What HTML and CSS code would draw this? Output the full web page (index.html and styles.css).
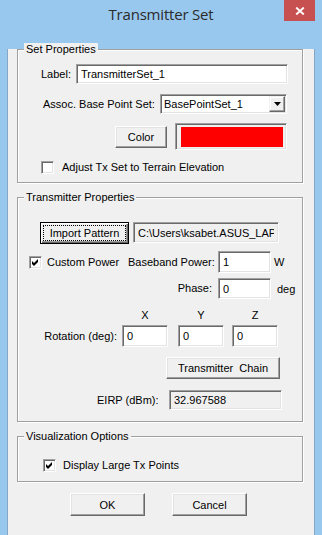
FILE: index.html
```html
<!DOCTYPE html>
<html lang="en">
<head>
    <meta charset="UTF-8">
    <title>Transmitter Set</title>
    <link rel="stylesheet" href="styles.css">
</head>
<body>
    <div class="window">
        <div class="titlebar">
            <span></span>
            <div class="title">Transmitter Set</div>
            <div class="close-btn">
                <svg width="10" height="8" viewBox="0 0 10 8">
                    <path d="M1.2 0.6 L8.8 7.4 M8.8 0.6 L1.2 7.4" stroke="#fff" stroke-width="2" fill="none"/>
                </svg>
            </div>
        </div>
        <div class="client">
            <!-- Set Properties -->
            <div class="group group-set">
                <div class="group-title">Set Properties</div>
                <div class="row row-label">
                    <span class="lbl lbl-label">Label:</span>
                    <input class="field field-label" type="text" value="TransmitterSet_1">
                </div>
                <div class="row row-base">
                    <span class="lbl lbl-base">Assoc. Base Point Set:</span>
                    <div class="combo">
                        <span class="combo-text">BasePointSet_1</span>
                        <span class="drop-btn">
                            <svg width="7" height="4" viewBox="0 0 7 4"><path d="M0 0 H7 L3.5 4 Z" fill="#000"/></svg>
                        </span>
                    </div>
                </div>
                <div class="row row-color">
                    <button class="btn btn-color">Color</button>
                    <div class="swatch"><div class="swatch-fill"></div></div>
                </div>
                <div class="row row-adjust">
                    <span class="checkbox"></span>
                    <span class="check-text">Adjust Tx Set to Terrain Elevation</span>
                </div>
            </div>

            <!-- Transmitter Properties -->
            <div class="group group-tx">
                <div class="group-title">Transmitter Properties</div>
                <div class="row row-import">
                    <button class="btn btn-default btn-import">Import Pattern</button>
                    <input class="field field-path" type="text" value="C:\Users\ksabet.ASUS_LAPTOP\Documents\pattern.uan" readonly>
                </div>
                <div class="row row-power">
                    <span class="check-item">
                        <span class="checkbox checked">
                            <svg width="9" height="9" viewBox="0 0 9 9"><path d="M1 3 L3 5 L7 1 L7 4 L3 8 L1 6 Z" fill="#000"/></svg>
                        </span>
                        <span class="check-text power-text">Custom Power</span>
                    </span>
                    <span class="lbl lbl-right">Baseband Power:</span>
                    <input class="field field-small field-power" type="text" value="1">
                    <span class="unit unit-w">W</span>
                </div>
                <div class="row row-phase">
                    <span class="lbl lbl-right">Phase:</span>
                    <input class="field field-small field-phase" type="text" value="0">
                    <span class="unit unit-deg">deg</span>
                </div>
                <div class="rot-grid">
                    <span></span>
                    <span class="axis">X</span>
                    <span class="axis">Y</span>
                    <span class="axis">Z</span>
                    <span class="lbl rot-label">Rotation (deg):</span>
                    <input class="field field-rot" type="text" value="0">
                    <input class="field field-rot" type="text" value="0">
                    <input class="field field-rot" type="text" value="0">
                </div>
                <div class="row row-chain">
                    <button class="btn btn-chain">Transmitter&nbsp; Chain</button>
                </div>
                <div class="row row-eirp">
                    <span class="lbl lbl-eirp">EIRP (dBm):</span>
                    <input class="field field-eirp" type="text" value="32.967588" readonly>
                </div>
            </div>

            <!-- Visualization Options -->
            <div class="group group-vis">
                <div class="group-title">Visualization Options</div>
                <div class="row row-large">
                    <span class="checkbox checked">
                        <svg width="9" height="9" viewBox="0 0 9 9"><path d="M1 3 L3 5 L7 1 L7 4 L3 8 L1 6 Z" fill="#000"/></svg>
                    </span>
                    <span class="check-text large-text">Display Large Tx Points</span>
                </div>
            </div>

            <div class="dialog-buttons">
                <button class="btn btn-dialog">OK</button>
                <button class="btn btn-dialog btn-cancel">Cancel</button>
            </div>
        </div>
    </div>
</body>
</html>
```

FILE: styles.css
```css
* {
    box-sizing: border-box;
    margin: 0;
    padding: 0;
    font-family: "Liberation Sans", Arial, sans-serif;
}

html, body {
    width: 100%;
    height: 100%;
    overflow: hidden;
}

body {
    background-color: #99c8ee;
    font-size: 11px;
    color: #000;
}

.window {
    width: 322px;
    height: 535px;
    background-color: #99c8ee;
}

/* title bar */
.titlebar {
    height: 30px;
    display: grid;
    grid-template-columns: 1fr auto 1fr;
}

.title {
    font-family: "Open Sans", "Noto Sans", sans-serif;
    font-size: 15px;
    line-height: 20px;
    padding-top: 4px;
    color: #2b2b2b;
    letter-spacing: -0.2px;
}

.close-btn {
    justify-self: end;
    width: 31px;
    height: 21px;
    margin-right: 7px;
    background-color: #c75050;
    display: flex;
    align-items: center;
    justify-content: center;
}

/* dialog body */
.client {
    margin-left: 7px;
    width: 308px;
    height: 497px;
    background-color: #f0f0f0;
    border: 1px solid #86a6c6;
    border-top: 0;
}

.group {
    margin: 0 11px 0 9px;
    border: 1px solid #a0a0a0;
    box-shadow: inset 1px 1px 0 #fff, 1px 1px 0 #fff;
}

.group-set {
    margin-top: 19px;
    padding-bottom: 8px;
}

.group-tx {
    margin-top: 14px;
    padding-bottom: 11px;
}

.group-vis {
    margin-top: 14px;
    padding-bottom: 9px;
}

.group-title {
    width: fit-content;
    margin: -7px 0 0 6px;
    padding: 0 2px;
    line-height: 13px;
    background-color: #f0f0f0;
}

.row {
    display: flex;
    align-items: center;
}

.lbl {
    line-height: 13px;
    white-space: nowrap;
}

/* sunken edit boxes */
.field {
    font: inherit;
    font-size: 11px;
    color: #000;
    background-color: #fff;
    border: 1px solid;
    border-color: #a0a0a0 #fff #fff #a0a0a0;
    box-shadow: inset 1px 1px 0 #696969, inset -1px -1px 0 #e3e3e3;
    padding: 0 4px;
    outline: none;
}

.field[readonly] {
    background-color: #f0f0f0;
}

/* raised push buttons */
.btn {
    font: inherit;
    font-size: 11px;
    color: #000;
    background-color: #f0f0f0;
    border: 1px solid;
    border-color: #fff #696969 #696969 #fff;
    box-shadow: inset -1px -1px 0 #a0a0a0, inset 1px 1px 0 #e3e3e3;
}

.btn-default {
    border-color: #000;
    box-shadow: inset 1px 1px 0 #fff, inset -1px -1px 0 #696969, inset -2px -2px 0 #a0a0a0;
    outline: 1px dotted #000;
    outline-offset: -4px;
}

.checkbox {
    flex: none;
    width: 13px;
    height: 13px;
    background-color: #fff;
    border: 1px solid;
    border-color: #a0a0a0 #fff #fff #a0a0a0;
    box-shadow: inset 1px 1px 0 #696969, inset -1px -1px 0 #e3e3e3;
    display: flex;
    align-items: center;
    justify-content: center;
}

.check-text {
    line-height: 13px;
    white-space: nowrap;
}

/* Set Properties rows */
.row-label {
    margin-top: 8px;
    height: 20px;
    padding-left: 23px;
}

.lbl-label {
    width: 35px;
}

.field-label {
    width: 212px;
    height: 20px;
}

.row-base {
    margin-top: 10px;
    height: 20px;
    padding-left: 25px;
}

.lbl-base {
    width: 117px;
}

.combo {
    width: 127px;
    height: 20px;
    background-color: #fff;
    border: 1px solid;
    border-color: #a0a0a0 #fff #fff #a0a0a0;
    box-shadow: inset 1px 1px 0 #696969, inset -1px -1px 0 #e3e3e3;
    display: flex;
    align-items: center;
    padding: 1px;
}

.combo-text {
    flex-grow: 1;
    padding-left: 2px;
}

.drop-btn {
    width: 16px;
    height: 16px;
    background-color: #f0f0f0;
    border: 1px solid;
    border-color: #f0f0f0 #696969 #696969 #f0f0f0;
    box-shadow: inset -1px -1px 0 #a0a0a0, inset 1px 1px 0 #fff;
    display: flex;
    align-items: center;
    justify-content: center;
}

.row-color {
    margin-top: 9px;
    height: 27px;
    padding-left: 97px;
}

.btn-color {
    width: 52px;
    height: 22px;
}

.swatch {
    margin-left: 8px;
    width: 112px;
    height: 27px;
    border: 1px solid;
    border-color: #a0a0a0 #fff #fff #a0a0a0;
    box-shadow: inset 1px 1px 0 #696969, inset -1px -1px 0 #e3e3e3;
    padding: 3px 3px 2px 5px;
    display: flex;
}

.swatch-fill {
    flex-grow: 1;
    background-color: #f00;
}

.row-adjust {
    margin-top: 11px;
    height: 13px;
    padding-left: 23px;
}

.row-adjust .check-text {
    margin-left: 8px;
}

/* Transmitter Properties rows */
.row-import {
    margin-top: 18px;
    height: 22px;
    padding-left: 22px;
    align-items: flex-start;
}

.btn-import {
    width: 89px;
    height: 22px;
}

.field-path {
    margin-left: 4px;
    width: 146px;
    height: 21px;
}

.row-power {
    margin-top: 7px;
    height: 22px;
    padding-left: 11px;
}

.check-item {
    width: 99px;
    display: flex;
    align-items: center;
}

.power-text {
    margin-left: 5px;
}

.lbl-right {
    width: 84px;
    text-align: right;
}

.field-small {
    margin-left: 6px;
    width: 53px;
}

.field-power {
    height: 22px;
}

.unit-w {
    margin-left: 3px;
}

.row-phase {
    margin-top: 5px;
    height: 21px;
    padding-left: 110px;
}

.field-phase {
    height: 21px;
}

.unit-deg {
    margin-left: 6px;
}

.rot-grid {
    margin-top: 10px;
    display: grid;
    grid-template-columns: 104px 56px 54px 46px;
    grid-template-rows: 13px 22px;
    row-gap: 3px;
}

.axis {
    width: 46px;
    line-height: 13px;
    text-align: center;
}

.rot-label {
    align-self: center;
    text-align: right;
    padding-right: 5px;
}

.field-rot {
    width: 46px;
    height: 22px;
}

.row-chain {
    margin-top: 10px;
    padding-left: 148px;
}

.btn-chain {
    width: 114px;
    height: 22px;
}

.row-eirp {
    margin-top: 11px;
    height: 20px;
    padding-left: 79px;
}

.lbl-eirp {
    width: 72px;
}

.field-eirp {
    width: 113px;
    height: 20px;
}

/* Visualization Options */
.row-large {
    margin-top: 16px;
    height: 13px;
    padding-left: 25px;
}

.large-text {
    margin-left: 7px;
}

/* OK / Cancel */
.dialog-buttons {
    margin-top: 11px;
    padding-left: 62px;
    display: flex;
}

.btn-dialog {
    width: 75px;
    height: 23px;
}

.btn-cancel {
    margin-left: 27px;
}
```
